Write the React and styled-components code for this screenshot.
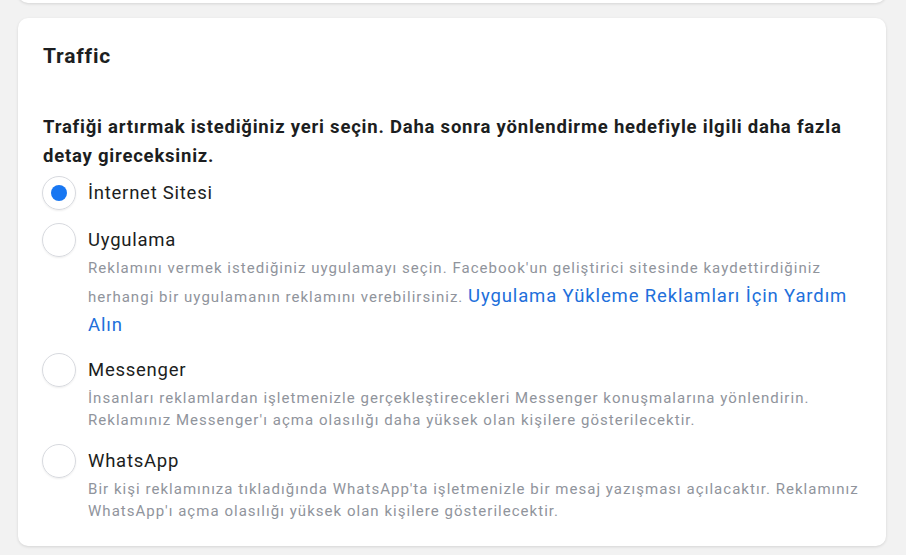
import React from "react";
import styled, { createGlobalStyle } from "styled-components";

const GlobalStyle = createGlobalStyle`
    body {
        margin: 0;
        background: #f2f2f2;
        font-family: Roboto, "Liberation Sans", Arial, sans-serif;
        -webkit-font-smoothing: antialiased;
    }
`;

const Page = styled.div`
    display: flex;
    flex-direction: column;
    gap: 15px;
    padding: 0 20px 10px 18px;
`;

const Card = styled.section`
    background: #fff;
    border-radius: 10px;
    box-shadow: 0 1px 3px rgba(0, 0, 0, 0.12);
`;

const PrevCard = styled(Card)`
    height: 23px;
    margin-top: -20px;
`;

const MainCard = styled(Card)`
    padding: 24px 18px 24px 25px;
`;

const Title = styled.h2`
    margin: 0;
    font-size: 21px;
    font-weight: 700;
    letter-spacing: 0.8px;
    line-height: 28px;
    color: #1c1e21;
`;

const Lead = styled.p`
    margin: 43px 0 5px;
    font-size: 18.5px;
    font-weight: 700;
    letter-spacing: 0.78px;
    line-height: 29px;
    color: #1c1e21;
`;

const RadioList = styled.div`
    display: flex;
    flex-direction: column;
    gap: 13px;
    margin-left: -1px;
`;

const Option = styled.label`
    display: flex;
    align-items: flex-start;
    gap: 12px;
    cursor: pointer;
`;

const Circle = styled.span`
    flex: none;
    width: 34px;
    height: 34px;
    box-sizing: border-box;
    border-radius: 50%;
    border: 1px solid #d8dadf;
    box-shadow: 0 1px 2px rgba(0, 0, 0, 0.07);
    display: flex;
    align-items: center;
    justify-content: center;

    &::after {
        content: "";
        width: 16px;
        height: 16px;
        border-radius: 50%;
        background: ${p => (p.$checked ? "#1877f2" : "transparent")};
    }
`;

const Body = styled.div`
    display: flex;
    flex-direction: column;
`;

const Label = styled.span`
    font-size: 18.5px;
    letter-spacing: 0.75px;
    line-height: 34px;
    color: #1c1e21;
`;

const Desc = styled.p`
    margin: ${p => (p.$loose ? "-3px" : "0")} 0 0;
    font-size: 15px;
    letter-spacing: 1.03px;
    line-height: ${p => (p.$loose ? "28px" : "22px")};
    color: #90949c;
`;

const HelpLink = styled.a`
    color: #216fdb;
    font-size: 18.5px;
    letter-spacing: 0.87px;
    text-decoration: none;
`;

const options = [
    { id: "web", label: "İnternet Sitesi", checked: true },
    {
        id: "app",
        label: "Uygulama",
        loose: true,
        desc: "Reklamını vermek istediğiniz uygulamayı seçin. Facebook'un geliştirici sitesinde kaydettirdiğiniz herhangi bir uygulamanın reklamını verebilirsiniz. ",
        link: "Uygulama Yükleme Reklamları İçin Yardım Alın",
    },
    {
        id: "messenger",
        label: "Messenger",
        desc: "İnsanları reklamlardan işletmenizle gerçekleştirecekleri Messenger konuşmalarına yönlendirin. Reklamınız Messenger'ı açma olasılığı daha yüksek olan kişilere gösterilecektir.",
    },
    {
        id: "whatsapp",
        label: "WhatsApp",
        desc: "Bir kişi reklamınıza tıkladığında WhatsApp'ta işletmenizle bir mesaj yazışması açılacaktır. Reklamınız WhatsApp'ı açma olasılığı yüksek olan kişilere gösterilecektir.",
    },
];

const App = () => {
    return (
        <>
            <GlobalStyle />
            <Page>
                <PrevCard />
                <MainCard>
                    <Title>Traffic</Title>
                    <Lead>
                        Trafiği artırmak istediğiniz yeri seçin. Daha sonra yönlendirme hedefiyle ilgili daha fazla detay gireceksiniz.
                    </Lead>
                    <RadioList>
                        {options.map(o => (
                            <Option key={o.id}>
                                <Circle $checked={o.checked} />
                                <Body>
                                    <Label>{o.label}</Label>
                                    {o.desc && (
                                        <Desc $loose={o.loose}>
                                            {o.desc}
                                            {o.link && <HelpLink href="#">{o.link}</HelpLink>}
                                        </Desc>
                                    )}
                                </Body>
                            </Option>
                        ))}
                    </RadioList>
                </MainCard>
            </Page>
        </>
    );
};

export default App;
